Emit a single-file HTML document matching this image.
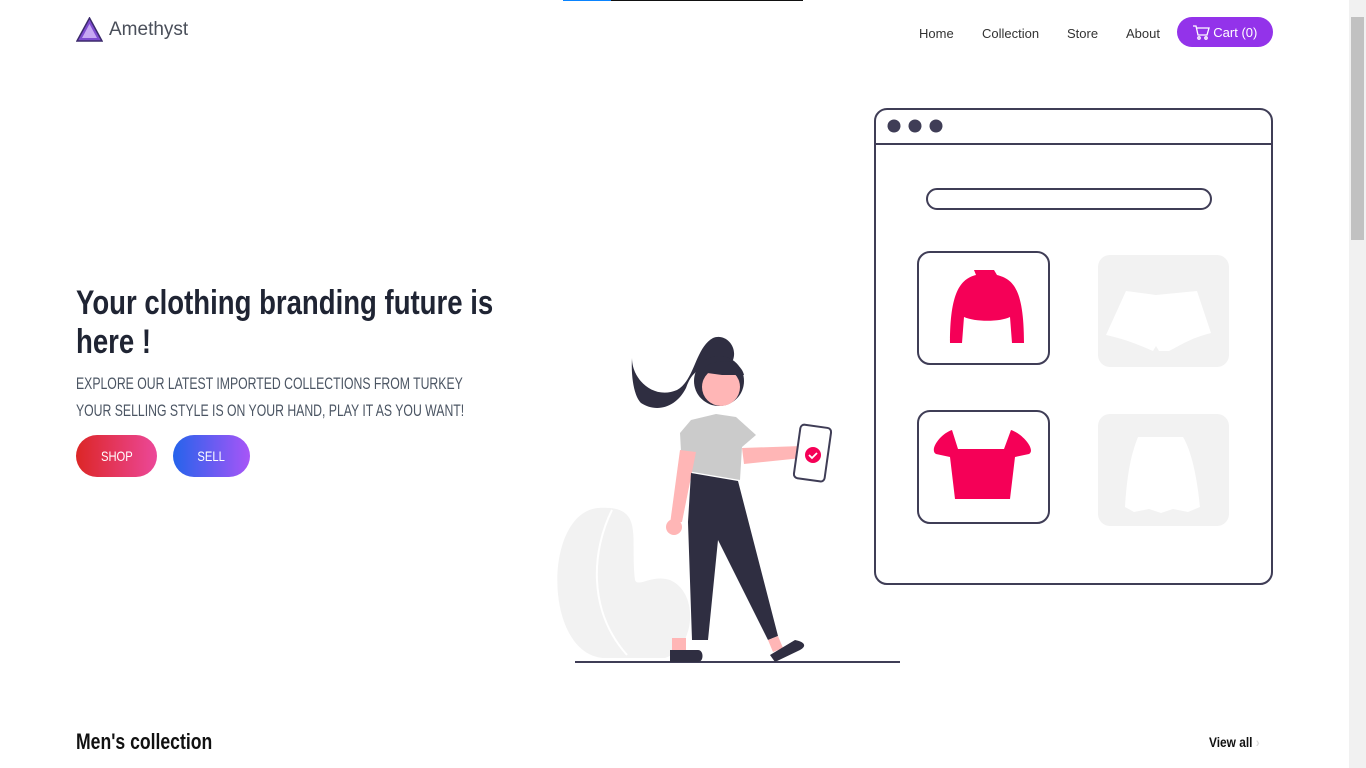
<!DOCTYPE html>
<html><head><meta charset="utf-8"><style>
*{margin:0;padding:0;box-sizing:border-box}
body{width:1366px;height:768px;overflow:hidden;background:#fff;font-family:"Liberation Sans",sans-serif;position:relative}
.logo{position:absolute;left:76px;top:17px;display:flex;align-items:center}
.logo span{font-size:19px;color:#4a4f5a;margin-left:6px;font-family:"Liberation Sans",sans-serif}
.nav a{position:absolute;top:26px;text-decoration:none;color:#333;font-size:13px}
.cart{position:absolute;left:1177px;top:17px;background:#9333ea;color:#fff;border-radius:15px;width:96px;height:30px;display:flex;align-items:center;justify-content:center;font-size:13px}
h1{position:absolute;left:76px;top:284px;font-size:34px;line-height:39px;color:#1f2433;font-weight:bold;white-space:nowrap;transform:scaleX(0.81);transform-origin:left}
.sub{position:absolute;left:76px;top:370px;font-size:17px;line-height:27px;color:#4b5563;transform:scaleX(0.72);transform-origin:left;white-space:nowrap}
.btn{position:absolute;top:435px;height:42px;border-radius:21px;color:#fff;display:flex;align-items:center;justify-content:center;font-size:14px}
.btn span{display:inline-block;transform:scaleX(0.8)}
.sb{position:absolute;right:0;top:0;width:17px;height:768px;background:#f1f1f1}
.sb div{position:absolute;left:2px;top:17px;width:13px;height:223px;background:#c1c1c1}
</style></head><body>
<div style="position:absolute;left:563px;top:0;width:48px;height:1px;background:#0a84ff"></div>
<div style="position:absolute;left:611px;top:0;width:192px;height:1px;background:#111"></div>
<div class="logo"><svg width="27" height="25" viewBox="0 0 27 25"><polygon points="13.5,1 26,24 1,24" fill="#7e4bd0" stroke="#3b2a6b" stroke-width="1.5"/><polygon points="13.5,7 21,21 6,21" fill="#c7a7f3"/></svg><span>Amethyst</span></div>
<div class="nav"><a style="left:919px">Home</a><a style="left:982px">Collection</a><a style="left:1067px">Store</a><a style="left:1126px">About</a></div>
<div class="cart"><svg width="17" height="15" viewBox="0 0 17 15" fill="none" stroke="#fff" stroke-width="1.3"><path d="M0 1h3l2 9h9l2-7H4"/><circle cx="6" cy="13" r="1.2"/><circle cx="13" cy="13" r="1.2"/></svg>&nbsp;Cart (0)</div>
<h1>Your clothing branding future is<br>here !</h1>
<div class="sub">EXPLORE OUR LATEST IMPORTED COLLECTIONS FROM TURKEY<br>YOUR SELLING STYLE IS ON YOUR HAND, PLAY IT AS YOU WANT!</div>
<div class="btn" style="left:76px;width:81px;background:linear-gradient(90deg,#dc2626,#ec4899)"><span>SHOP</span></div>
<div class="btn" style="left:173px;width:77px;background:linear-gradient(90deg,#2563eb,#a855f7)"><span>SELL</span></div>
<svg style="position:absolute;left:0;top:0" width="1366" height="768">
<rect x="875" y="109" width="397" height="475" rx="12" fill="none" stroke="#3f3d56" stroke-width="2"/>
<line x1="875" y1="144" x2="1272" y2="144" stroke="#3f3d56" stroke-width="2"/>
<circle cx="894" cy="126" r="6.5" fill="#3f3d56"/><circle cx="915" cy="126" r="6.5" fill="#3f3d56"/><circle cx="936" cy="126" r="6.5" fill="#3f3d56"/>
<rect x="927" y="189" width="284" height="20" rx="10" fill="none" stroke="#3f3d56" stroke-width="2"/>
<rect x="918" y="252" width="131" height="112" rx="12" fill="none" stroke="#3f3d56" stroke-width="2"/>
<rect x="918" y="411" width="131" height="112" rx="12" fill="none" stroke="#3f3d56" stroke-width="2"/>
<rect x="1098" y="255" width="131" height="112" rx="12" fill="#f2f2f2"/>
<rect x="1098" y="414" width="131" height="112" rx="12" fill="#f2f2f2"/>
<path d="M974 270h20l3 5c15 4 27 12 27 68h-12l-2-26c-10 5-35 5-46 0l-2 26h-12c0-50 10-64 26-68z" fill="#f50057"/>
<path d="M952 430l6 19h46l7-19c12 4 25 20 18 24l-14 3-5 42h-55l-5-42-14-3c-7-4 4-20 16-24z" fill="#f50057"/>
<path d="M1126 291l30 4 41-4 14 42c-20 5-30 12-42 18h-10l-3-5-3 5c-14-6-28-12-47-16z" fill="#fff"/>
<path d="M1138 437h45c12 20 16 60 17 70l-12 5-15-3-12 4-12-4-15 3-9-5c2-30 5-50 13-70z" fill="#fff"/>
<path d="M598 508c-55 5-55 145 5 150h62c30-10 35-65 5-78-18-6-32 8-35 0-5-45 10-75-37-72z" fill="#f2f2f2"/>
<path d="M612 510c-20 40-25 100 15 145" stroke="#fff" stroke-width="2" fill="none"/>
<line x1="575" y1="662" x2="900" y2="662" stroke="#3f3d56" stroke-width="2"/>
<path d="M632 358c0 22 22 42 45 32 18-10 18-42 36-52 12-5 25 8 20 22l-12 8c-20-5-30 5-35 20-10 20-30 25-45 15-8-8-10-30-9-45z" fill="#2f2e41"/>
<circle cx="719" cy="381" r="25" fill="#2f2e41"/>
<circle cx="721" cy="387" r="19" fill="#ffb6b6"/>
<path d="M700 372c10-15 40-15 44 3l-22 0z" fill="#2f2e41"/>
<path d="M691 420l25-6 20 3 20 18-14 12-2 33-47-8-11-2-2-37z" fill="#cbcbcb"/>
<path d="M742 448l60-2 0 12-58 6z" fill="#ffb6b6"/>
<path d="M680 450l16 2-14 70-12 2z" fill="#ffb6b6"/><circle cx="674" cy="527" r="8" fill="#ffb6b6"/>
<path d="M691 473l47 8 40 155-10 4-50-100-10 100h-16l-4-118z" fill="#2f2e41"/>
<path d="M672 638h14v12h-14zM768 640l10-4 5 12-10 4z" fill="#ffb6b6"/>
<path d="M670 650h28c6 0 6 12 0 12h-28zM770 655l25-15c10 2 12 6 5 10l-25 12z" fill="#2f2e41"/>
<rect x="797" y="426" width="31" height="54" rx="4" transform="rotate(8 812 453)" fill="#fff" stroke="#3f3d56" stroke-width="2"/>
<circle cx="813" cy="455" r="8" fill="#f50057"/><path d="M809 455l3 3 5-5" stroke="#fff" stroke-width="1.8" fill="none"/>
</svg>
<div style="position:absolute;left:76px;top:729px;font-size:22px;font-weight:bold;color:#111;white-space:nowrap;transform:scaleX(0.8);transform-origin:left">Men's collection</div>
<div style="position:absolute;left:1209px;top:734px;font-size:14px;font-weight:bold;color:#111;white-space:nowrap;transform:scaleX(0.85);transform-origin:left">View all <span style="color:#ddd">›</span></div>
<div class="sb"><div></div></div>
</body></html>
